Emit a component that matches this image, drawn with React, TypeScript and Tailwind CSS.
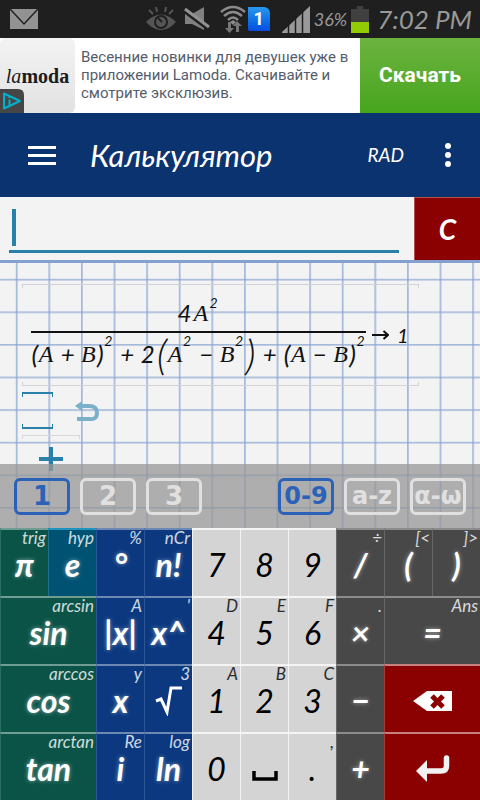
import type { ReactNode } from "react";
import clsx from "clsx";

const hand = "font-['Lato','Noto_Sans',sans-serif] italic";

// Key colours, one per group of functions
const TONES = {
  green: "bg-[#0b5347] text-white border-t-[#6f9d94] border-l-[#2b6d62]",
  teal: "bg-[#005273] text-white border-t-[#1d93bd] border-l-[#1b7396]",
  blue: "bg-[#0b387f] text-white border-t-[#6d88b3] border-l-[#2c5595]",
  light: "bg-[#d4d4d4] text-black border-t-[#f4f4f4] border-l-[#f4f4f4]",
  dark: "bg-[#484848] text-white border-t-[#8c8c8c] border-l-[#686868]",
  red: "bg-[#8b0000] text-white border-t-[#c58080] border-l-[#a83a3a]",
};

const LABELS = {
  glow: "font-bold [text-shadow:0_0_4px_rgba(255,255,255,0.5)]",
  plain: "font-normal",
};

type KeyData = {
  label: ReactNode;
  name?: string;
  hint?: string;
  tone: keyof typeof TONES;
  wide?: boolean;
};

const BackspaceIcon = () => (
  <svg width="40" height="22" viewBox="0 0 40 22">
    <path d="M0 11 14 1h25v20H14z" fill="#fff" />
    <path d="m19 6 11 11M30 6 19 17" stroke="#8b0000" strokeWidth="5" />
  </svg>
);

const EnterIcon = () => (
  <svg width="34" height="28" viewBox="0 0 34 28">
    <path d="M0 16 11 5v22z" fill="#f2f2f2" />
    <path d="M10 16h15q5.500 0 5.500-5V3" fill="none" stroke="#f2f2f2" strokeWidth="5.500" strokeLinecap="round" />
  </svg>
);

const RootIcon = () => (
  <svg width="28" height="30" viewBox="0 0 28 30">
    <path d="m1 15 5-2 6 13L16 2h11" fill="none" stroke="#fff" strokeWidth="3" />
  </svg>
);

const SpaceIcon = () => (
  <svg width="26" height="26" viewBox="0 0 26 26">
    <path d="M2 15v8h22v-8" fill="none" stroke="#000" strokeWidth="3.500" />
  </svg>
);

const KEYS: KeyData[] = [
  { label: "π", hint: "trig", tone: "green" },
  { label: "e", hint: "hyp", tone: "teal" },
  { label: "°", hint: "%", tone: "blue" },
  { label: "n!", hint: "nCr", tone: "blue" },
  { label: "7", tone: "light" },
  { label: "8", tone: "light" },
  { label: "9", tone: "light" },
  { label: "/", hint: "÷", tone: "dark" },
  { label: "(", hint: "[<", tone: "dark" },
  { label: ")", hint: "]>", tone: "dark" },

  { label: "sin", hint: "arcsin", tone: "green", wide: true },
  { label: "|x|", hint: "A", tone: "blue" },
  { label: "x^", hint: "'", tone: "blue" },
  { label: "4", hint: "D", tone: "light" },
  { label: "5", hint: "E", tone: "light" },
  { label: "6", hint: "F", tone: "light" },
  { label: "×", hint: ".", tone: "dark" },
  { label: "=", hint: "Ans", tone: "dark", wide: true },

  { label: "cos", hint: "arccos", tone: "green", wide: true },
  { label: "x", hint: "y", tone: "blue" },
  { label: <RootIcon />, name: "square root", hint: "3", tone: "blue" },
  { label: "1", hint: "A", tone: "light" },
  { label: "2", hint: "B", tone: "light" },
  { label: "3", hint: "C", tone: "light" },
  { label: "−", tone: "dark" },
  { label: <BackspaceIcon />, name: "backspace", tone: "red", wide: true },

  { label: "tan", hint: "arctan", tone: "green", wide: true },
  { label: "i", hint: "Re", tone: "blue" },
  { label: "ln", hint: "log", tone: "blue" },
  { label: "0", tone: "light" },
  { label: <SpaceIcon />, name: "space", tone: "light" },
  { label: ".", hint: ",", tone: "light" },
  { label: "+", tone: "dark" },
  { label: <EnterIcon />, name: "enter", tone: "red", wide: true },
];

const Key = ({ label, name, hint, tone, wide }: KeyData) => {
  return (
    <button
      aria-label={name}
      className={clsx(hand, "flex h-17 flex-col border-t-2 border-l", TONES[tone], wide && "col-span-2")}
    >
      <span className="h-4 w-full pr-0.5 text-right text-[17px] leading-4 opacity-80">{hint}</span>
      <span
        className={clsx(
          "flex w-full flex-1 items-center justify-center pb-3 text-[32px] leading-9",
          tone === "light" ? LABELS.plain : LABELS.glow
        )}
      >
        {label}
      </span>
    </button>
  );
};

const StatusBar = () => (
  <div className="flex h-[38px] items-center bg-[#1f1f1f] pr-2 pl-2.5 text-[#999]">
    <svg width="28" height="20" viewBox="0 0 28 20">
      <path d="M0 0h28v20H0z" fill="#929292" />
      <path d="m0 0 14 15L28 0" fill="none" stroke="#1f1f1f" strokeWidth="1.500" />
    </svg>
    <svg width="30" height="26" viewBox="0 0 30 26" className="mr-2 ml-auto">
      <path d="M0 16Q15 1 30 16 15 32 0 16z" fill="#555" />
      <circle cx="15" cy="16" r="7" fill="#1f1f1f" />
      <circle cx="15" cy="16" r="5" fill="#555" />
      <path d="M12 12l4 4" stroke="#1f1f1f" strokeWidth="2" />
      <path d="m3 4 4 4M10 1l1 5M20 1l-1 5M27 4l-4 4" stroke="#555" strokeWidth="2" />
    </svg>
    <svg width="26" height="24" viewBox="0 0 26 24" className="mr-2.5">
      <path d="M1 7h7L20 0v23L8 17H1z" fill="#808080" />
      <path d="m1 5 24 18" stroke="#1f1f1f" strokeWidth="3" />
      <path d="m1 2 24 18" stroke="#929292" strokeWidth="3" />
    </svg>
    <svg width="26" height="28" viewBox="0 0 26 28" className="mr-0.5">
      <g fill="none" stroke="#8a8a8a" strokeWidth="2.500">
        <path d="M1 7q12-10 24 0M4 11q9-8 18 0M8 15q5-5 10 0" />
      </g>
      <path d="m10 17 3-2 3 2-3 3z" fill="#8a8a8a" />
      <path d="M8 17h3v6h3l-4.500 5L5 23h3zM16 27v-6h-3l4-5 5 5h-3v6z" fill="#777" />
    </svg>
    <span className="mr-3 flex h-6 w-[22px] items-center justify-center rounded-tr-md rounded-bl-xs bg-linear-to-b from-[#2b97ec] to-[#0a4de0] font-['Roboto',sans-serif] text-lg font-bold text-white">
      1
    </span>
    <svg width="28" height="27" viewBox="0 0 28 27" className="mr-1">
      <path d="M0 27v-1L28 0v27z" fill="#999" />
      <path d="M6.500 0v27M13.500 0v27M20.500 0v27" stroke="#1f1f1f" strokeWidth="1.500" />
    </svg>
    <span className={clsx(hand, "mr-1 text-lg")}>36%</span>
    <svg width="18" height="27" viewBox="0 0 18 27" className="mr-2">
      <path d="M6 0h6v3h6v24H0V3h6z" fill="#404040" />
      <path d="M0 16h18v11H0z" fill="#93cc04" />
    </svg>
    <span className={clsx(hand, "text-[26px]")}>7:02 PM</span>
  </div>
);

const AdBanner = () => (
  <div className="flex h-[75px] bg-white font-['Roboto',sans-serif]">
    <div className="relative flex w-[75px] shrink-0 items-center justify-center rounded-md bg-linear-to-b from-[#f3f3f3] to-[#e2e2e2] font-['Liberation_Serif',serif] text-xl text-[#1c1c1c]">
      <i>la</i>
      <b>moda</b>
      <svg width="24" height="24" viewBox="0 0 24 24" className="absolute bottom-0 left-0">
        <path d="M0 0h18q6 0 6 6v18H0z" fill="#464646" />
        <path d="M4 4.500v15L20 12z" fill="none" stroke="#00b0cc" strokeWidth="2" strokeLinejoin="round" />
        <path d="M9.500 7v2M9.500 10.500V16" stroke="#00b0cc" strokeWidth="2" />
      </svg>
    </div>
    <p className="flex-1 pt-2.5 pl-1.5 text-[15px] leading-[18px] text-[#555d6d]">
      Весенние новинки для девушек уже в приложении Lamoda. Скачивайте и смотрите эксклюзив.
    </p>
    <a
      href="#"
      className="flex w-[120px] shrink-0 items-center justify-center bg-linear-to-b from-[#6cb33f] to-[#46a51b] text-[21px] font-bold text-white"
    >
      Скачать
    </a>
  </div>
);

const Header = () => (
  <header className={clsx(hand, "flex h-21 items-center bg-[#0b336f] pr-5 pl-7 text-white")}>
    <button aria-label="menu" className="flex w-7 flex-col gap-[5px]">
      <span className="h-[3px] w-full bg-white" />
      <span className="h-[3px] w-full bg-white" />
      <span className="h-[3px] w-full bg-white" />
    </button>
    <h1 className="ml-[34px] flex-1 text-[31px]">Калькулятор</h1>
    <button className="mr-8 text-[19px]">RAD</button>
    <button aria-label="more options" className="flex w-6 flex-col items-center gap-[3px]">
      <span className="size-1.5 rounded-full bg-white" />
      <span className="size-1.5 rounded-full bg-white" />
      <span className="size-1.5 rounded-full bg-white" />
    </button>
  </header>
);

const Entry = () => (
  <div className="flex h-[66px] border-b-3 border-[#84a0ce] bg-[#f3f3f3]">
    <div className="mt-3 mr-[15px] mb-[7px] ml-[9px] flex flex-1 border-b-3 border-[#2981aa] pl-[3px]">
      <span className="h-[37px] w-1 bg-[#2981aa]" />
      <input aria-label="expression" className={clsx(hand, "h-9 min-w-0 flex-1 pl-1 text-3xl outline-none")} />
    </div>
    <button className={clsx(hand, "w-[66px] border-t border-l border-[#b25050] bg-[#8b0000] text-[28px] font-bold text-white")}>
      C
    </button>
  </div>
);

// Square paper behind the worked expressions
const GRID = 32.6;
const Paper = () => (
  <svg width="100%" height="100%" className="absolute inset-0">
    <defs>
      <pattern id="paper" width={GRID} height={GRID} patternUnits="userSpaceOnUse">
        <path d={`M16.700 0v${GRID}M0 16.700h${GRID}`} stroke="#8ba6d3" strokeWidth="1.300" />
      </pattern>
    </defs>
    <rect width="100%" height="100%" fill="url(#paper)" />
  </svg>
);

const Var = ({ children }: { children: ReactNode }) => (
  <i className="w-4 font-['Liberation_Serif',serif]">{children}</i>
);
const Sup = () => <sup className="top-0 w-2.5 self-start text-sm leading-4">2</sup>;
const Op = ({ children }: { children: ReactNode }) => <span className="w-7 text-center">{children}</span>;
const Paren = ({ children, big }: { children: ReactNode; big?: boolean }) => (
  <span className={big ? "w-3 text-center text-[42px] font-light" : "w-2 text-center text-[26px]"}>{children}</span>
);

const TabGroup = ({ tabs, className }: { tabs: string[]; className: string }) => (
  <div className={clsx("flex gap-2.5 font-['DejaVu_Sans',sans-serif] font-bold", className)}>
    {tabs.map((tab, index) => (
      <button
        key={tab}
        className={clsx(
          "flex h-[37px] w-14 items-center justify-center rounded-md border-3 whitespace-nowrap",
          index === 0 ? "border-[#2b62b8] text-[#2b62b8]" : "border-[#e0e0e0] text-[#e0e0e0]"
        )}
      >
        {tab}
      </button>
    ))}
  </div>
);

const Worksheet = () => (
  <section className="relative flex-1 overflow-hidden bg-[#f3f3f3] pb-12">
    <Paper />
    <div className="relative px-[22px] pt-[21px]">
      <div className={clsx(hand, "relative flex h-[102px] w-[397px] items-center pl-[9px] text-[#111]")}>
        <span className="absolute inset-x-0 top-0 h-1 border-x border-t border-[#d2d2d6]" />
        <span className="absolute inset-x-0 bottom-0 h-1 border-x border-b border-[#d2d2d6]" />
        <div className="w-[335px] text-2xl leading-7">
          <div className="flex h-9 items-center justify-center">
            <span className="w-4">4</span>
            <Var>A</Var>
            <Sup />
          </div>
          <div className="flex h-11 items-center justify-center border-t-2 border-[#111]">
            <Paren>(</Paren>
            <Var>A</Var>
            <Op>+</Op>
            <Var>B</Var>
            <Paren>)</Paren>
            <Sup />
            <Op>+</Op>
            <span className="w-4">2</span>
            <Paren big>(</Paren>
            <Var>A</Var>
            <Sup />
            <Op>−</Op>
            <Var>B</Var>
            <Sup />
            <Paren big>)</Paren>
            <Op>+</Op>
            <Paren>(</Paren>
            <Var>A</Var>
            <Op>−</Op>
            <Var>B</Var>
            <Paren>)</Paren>
            <Sup />
          </div>
        </div>
        <svg width="17" height="10" viewBox="0 0 17 10" className="mr-2 ml-1.5">
          <path d="M0 5h16M11.500 1 16 5l-4.500 4" fill="none" stroke="#111" strokeWidth="2" />
        </svg>
        <span className="text-xl">1</span>
      </div>
      <div className="mt-1.5 flex h-[37px] items-center gap-[22px]">
        <button aria-label="empty entry" className="flex h-full w-[31px] flex-col justify-between">
          <span className="h-[5px] w-full border-x border-t-2 border-[#2981aa]" />
          <span className="h-[5px] w-full border-x border-b-2 border-[#2981aa]" />
        </button>
        <button aria-label="undo">
          <svg width="25" height="22" viewBox="0 0 25 22">
            <path d="M0 6 7 1v10z" fill="#7bb0cb" />
            <path d="M6 6h8q8 0 8 7t-8 6H2" fill="none" stroke="#7bb0cb" strokeWidth="4" />
          </svg>
        </button>
      </div>
      <div className="mt-1.5 h-1 w-[58px] border-x border-t border-[#d8d8dc]" />
      <button aria-label="add" className="mt-2 flex w-[58px] justify-center">
        <svg width="24" height="24" viewBox="0 0 24 24">
          <path d="M12 0v24M0 12h24" stroke="#2981aa" strokeWidth="4" />
        </svg>
      </button>
    </div>
    <div className="absolute inset-x-0 bottom-0 flex h-16 items-center justify-between bg-[#979797]/75 px-3.5">
      <TabGroup tabs={["1", "2", "3"]} className="text-[26px]" />
      <TabGroup tabs={["0-9", "a-z", "α-ω"]} className="text-2xl" />
    </div>
  </section>
);

export default function App() {
  return (
    <div className="flex min-h-screen flex-col">
      <StatusBar />
      <AdBanner />
      <Header />
      <Entry />
      <Worksheet />
      <div className="grid grid-cols-10">
        {KEYS.map((item, index) => (
          <Key key={index} {...item} />
        ))}
      </div>
    </div>
  );
}
